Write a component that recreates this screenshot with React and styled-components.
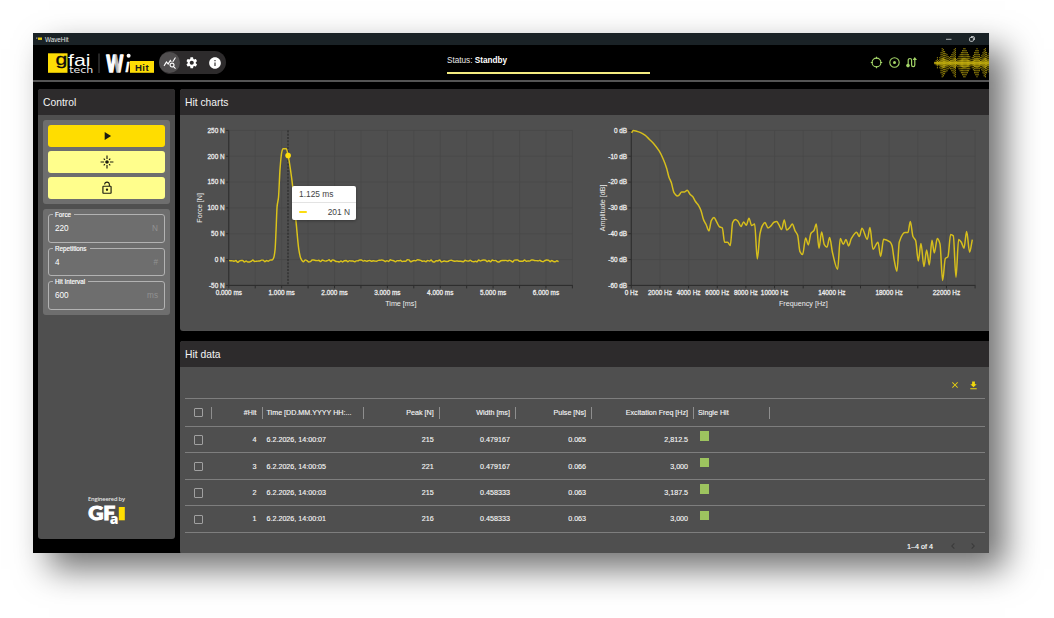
import React from "react";
import styled, { createGlobalStyle } from "styled-components";
import {
  MdQueryStats, MdSettings, MdInfo, MdPlayArrow, MdFlare, MdLockOpen,
  MdClose, MdDownload, MdChevronLeft, MdChevronRight,
} from "react-icons/md";

const GlobalStyle = createGlobalStyle`
  *, *::before, *::after { box-sizing: border-box; }
  body {
    margin: 0;
    background: #fff;
    color: #fff;
    font-family: "Liberation Sans", Arial, sans-serif;
    overflow: hidden;
  }
  svg { display: block; }
`;

const Page = styled.main`
  width: 1054px;
  height: 618px;
  padding: 33px 0 0 33px;
  overflow: hidden;
`;
const AppWindow = styled.div`
  width: 956px;
  height: 520px;
  display: flex;
  flex-direction: column;
  background: #000;
  overflow: hidden;
  box-shadow: 16px 16px 32px rgba(0, 0, 0, 0.56);
`;

const TitleBar = styled.div`
  flex: none;
  height: 12px;
  background: #1a2226;
  display: flex;
  align-items: center;
  padding: 0 14px 0 3px;
  font-size: 6.3px;
  color: #e3e5e6;
`;
const TitleText = styled.span`
  margin-left: 3px;
  flex: 1;
`;
const WindowButtons = styled.div`
  display: flex;
  gap: 17px;
  align-items: center;
`;

const Header = styled.header`
  flex: none;
  height: 37px;
  display: flex;
  align-items: center;
  border-bottom: 2px solid #545454;
  padding-left: 15px;
`;
const Brand = styled.div`
  width: 111px;
  height: 35px;
`;
const NavPill = styled.nav`
  width: 67px;
  height: 23px;
  border-radius: 12px;
  background: #2d2b2c;
  display: flex;
  align-items: center;
  gap: 1.7px;
`;
const NavButton = styled.button`
  width: 21px;
  height: 21px;
  padding: 0;
  border: 0;
  border-radius: 50%;
  display: grid;
  place-items: center;
  color: #fff;
  background: ${(p) => (p.$active ? "#504e4f" : "transparent")};
`;
const Status = styled.div`
  width: 203px;
  height: 20px;
  margin: 2px 0 0 221px;
  font-size: 8.2px;
  line-height: 9px;
  padding-top: 2px;
  color: #e8e8e8;
  border-bottom: 2px solid #f3eb80;
  b { color: #fff; }
`;
const Indicators = styled.div`
  display: flex;
  gap: 4.5px;
  margin-left: 220px;
`;
const WaveLogo = styled.div`
  margin-left: auto;
  width: 55px;
  height: 32px;
`;

const Body = styled.div`
  flex: 1;
  min-height: 0;
  display: flex;
  gap: 5px;
  padding: 7px 0 0 5px;
`;
const Panel = styled.section`
  width: ${(p) => p.$w || "auto"};
  height: ${(p) => p.$h};
  flex: none;
  background: #4f4f4f;
  border-radius: ${(p) => p.$radius || "3px 0 0 3px"};
  overflow: hidden;
  display: flex;
  flex-direction: column;
`;
const PanelTitle = styled.h2`
  margin: 0;
  flex: none;
  height: 26px;
  padding: 0 5px;
  background: #2d2b2c;
  font-size: 10.3px;
  line-height: 27px;
  font-weight: 400;
  color: #f4f4f4;
`;
const MainColumn = styled.div`
  flex: 1;
  min-width: 0;
  display: flex;
  flex-direction: column;
  gap: 10px;
`;

const Group = styled.div`
  margin: 5px 5px 0;
  padding: ${(p) => p.$top || "5px"} 5px 5px;
  border-radius: 3px;
  background: #6e6e6e;
  display: flex;
  flex-direction: column;
  gap: ${(p) => p.$gap};
`;
const ActionButton = styled.button`
  height: 21.6px;
  padding: 0;
  border: 0;
  border-radius: 3px;
  display: grid;
  place-items: center;
  color: #1c1c10;
  background: ${(p) => (p.$primary ? "#ffdd00" : "#fffe8c")};
`;
const Field = styled.fieldset`
  margin: 0;
  height: 31.5px;
  min-width: 0;
  padding: 0 6px;
  border: 1px solid #b2b2b2;
  border-radius: 3px;
  legend {
    margin-left: -2px;
    padding: 0 3px 0 2px;
    font-size: 6.3px;
    line-height: 7px;
    height: 7px;
    color: #fff;
    -webkit-text-stroke: 0.15px #fff;
  }
`;
const FieldRow = styled.div`
  width: 100%;
  height: 21px;
  display: flex;
  align-items: center;
  justify-content: space-between;
  font-size: 8.2px;
  color: #fff;
`;
const Unit = styled.span`
  color: #929292;
`;
const Engineered = styled.div`
  margin: auto auto 12px;
  width: 40px;
  height: 32px;
`;

const Charts = styled.div`
  display: flex;
`;
const AxisText = styled.text`
  font-size: 6.4px;
  fill: #ededed;
  stroke: #ededed;
  stroke-width: 0.26px;
`;
const AxisName = styled.text`
  font-size: 7.2px;
  fill: #ededed;
`;
const ChartBox = styled.div`
  position: relative;
  width: ${(p) => p.$w}px;
  height: 215px;
`;
const Tooltip = styled.div`
  position: absolute;
  left: 112px;
  top: 71px;
  width: 64px;
  height: 34px;
  background: #fff;
  border-radius: 2px;
  box-shadow: 0 1px 3px rgba(0, 0, 0, 0.3);
  color: #444;
  font-size: 8.4px;
`;
const TooltipHead = styled.div`
  height: 17px;
  line-height: 17px;
  padding-left: 7px;
  border-bottom: 1px solid #e3e3e3;
`;
const TooltipRow = styled.div`
  height: 17px;
  display: flex;
  align-items: center;
  justify-content: space-between;
  padding: 0 6px 0 7px;
`;
const SeriesMark = styled.i`
  width: 8px;
  height: 2px;
  border-radius: 1px;
  background: #fbdc12;
`;

const TableTools = styled.div`
  height: 31px;
  flex: none;
  display: flex;
  justify-content: flex-end;
  align-items: center;
  gap: 8px;
  padding: 6px 10px 0 0;
  color: #f0d80c;
`;
const Table = styled.div`
  margin: 0 4px 0 5px;
  font-size: 7.15px;
  color: #f7f7f7;
  -webkit-text-stroke: 0.12px #f7f7f7;
  border-top: 1.5px solid #7e7e7e;
`;
const TableRow = styled.div`
  height: ${(p) => (p.$head ? 28.4 : 26.45)}px;
  display: grid;
  grid-template-columns: 26.5px 51px 101px 76.2px 76.2px 76.2px 102px 76px 1fr;
  align-items: center;
  padding-top: 1px;
  border-bottom: 1.5px solid #7e7e7e;
`;
const Cell = styled.div`
  height: 12px;
  line-height: 12px;
  display: flex;
  align-items: center;
  justify-content: ${(p) => (p.$left ? "flex-start" : "flex-end")};
  padding: ${(p) => (p.$left ? "0 0 0 4px" : "0 5px 0 0")};
  border-right: 1px solid ${(p) => (p.$sep ? "#8e8e8e" : "transparent")};
  white-space: nowrap;
`;
const CheckCell = styled(Cell)`
  padding: 0 0 0 8.5px;
  justify-content: flex-start;
`;
const Check = styled.span`
  width: 9.5px;
  height: 9.5px;
  border: 1px solid #a0a0a0;
  border-radius: 1px;
`;
const HitSwatch = styled.span`
  width: 9.5px;
  height: 9.5px;
  margin: 0 0 8px 1.5px;
  background: #9dc45f;
`;
const Pager = styled.div`
  flex: 1;
  display: flex;
  align-items: center;
  justify-content: flex-end;
  gap: 8px;
  padding: 6px 10px 0 0;
  font-size: 7.2px;
  color: #3a3a3a;
  span { color: #fff; margin-right: 6px; -webkit-text-stroke: 0.15px #fff; }
`;

// Monotone cubic path through a list of [x, y] points.
function smoothPath(pts) {
  const n = pts.length;
  const slope = (i) => (pts[i + 1][1] - pts[i][1]) / (pts[i + 1][0] - pts[i][0]);
  const m = pts.map((_, i) => {
    if (i === 0) return slope(0);
    if (i === n - 1) return slope(n - 2);
    const a = slope(i - 1);
    const b = slope(i);
    return a * b <= 0 ? 0 : (2 * a * b) / (a + b);
  });
  let d = `M${pts[0][0]},${pts[0][1]}`;
  for (let i = 0; i < n - 1; i++) {
    const [x0, y0] = pts[i];
    const [x1, y1] = pts[i + 1];
    const h = (x1 - x0) / 3;
    d += `C${(x0 + h).toFixed(2)},${(y0 + m[i] * h).toFixed(2)} ${(x1 - h).toFixed(2)},${(y1 - m[i + 1] * h).toFixed(2)} ${x1.toFixed(2)},${y1.toFixed(2)}`;
  }
  return d;
}

const pulse = [
  [43.4, 129.6], [45, 127], [46.3, 119], [47.3, 99], [48.3, 76], [49.7, 67], [51.2, 39],
  [53, 21.5], [54.2, 18.3], [57.4, 18.3], [59.5, 26], [61.5, 38], [64, 57], [67.5, 94],
  [70, 119], [72, 128], [74.5, 131.4],
];
function noise(from, to, seed) {
  const out = [];
  let s = seed;
  for (let x = from; x <= to; x += 1.7) {
    s = (s * 16807) % 2147483647;
    const r = s / 2147483647 - 0.5;
    out.push([x, 130.5 + r * 2.2 + (x < 10 ? 0.7 : 0)]);
  }
  return out;
}
const forceLine = [...noise(0.3, 42, 77), ...pulse, ...noise(76.5, 330.5, 4321)];

const spectrum = [
  125,69, 130,62, 140,64, 152,68, 165,76, 178,88, 192,102, 208,124, 220,148, 230,175,
  237,202, 244,218, 252,248, 262,258, 268,255, 275,246, 284,246, 292,241, 300,253,
  308,260, 316,274, 326,287, 333,302, 341,330, 348,343, 357,363, 364,332, 372,323,
  380,336, 388,350, 397,354, 404,397, 413,397, 421,407, 428,338, 436,329, 444,334,
  453,350, 461,336, 469,346, 477,325, 485,347, 494,342, 502,447, 510,372, 517,348,
  525,338, 534,354, 543,348, 552,337, 560,335, 567,345, 575,359, 583,330, 590,360,
  600,352, 607,342, 615,362, 623,376, 630,425, 638,434, 647,384, 655,405, 663,370,
  672,362, 679,342, 687,415, 695,366, 703,404, 711,412, 719,383, 728,430, 743,478,
  751,386, 760,403, 768,389, 776,408, 784,386, 800,367, 808,380, 816,355, 832,388,
  840,353, 849,418, 864,397, 872,440, 881,388, 900,396, 906,407, 913,452, 921,484,
  928,396, 945,368, 954,368, 961,335, 969,380, 977,392, 985,453, 993,401, 1002,470,
  1010,420, 1018,465, 1026,391, 1033,429, 1042,386, 1050,402, 1058,512, 1066,446,
  1074,440, 1082,374, 1090,378, 1098,502, 1106,389, 1114,397, 1122,415, 1130,365,
  1139,427, 1147,389,
];
const spectrumLine = [];
for (let i = 0; i < spectrum.length; i += 2) {
  spectrumLine.push([(spectrum[i] - 124) / 3, (spectrum[i + 1] - 61.5) / 3]);
}

function Axes({ width, xStep, xCount, yLabels, xLabels }) {
  const dy = 155 / (yLabels.length - 1);
  return (
    <g>
      {yLabels.map((t, i) => (
        <g key={t}>
          <line x1="0" x2={width} y1={i * dy} y2={i * dy} stroke="#474747" strokeWidth="0.7" />
          <line x1="-3" x2="0" y1={i * dy} y2={i * dy} stroke="#2c2c2c" strokeWidth="1" />
          <AxisText x="-4.2" y={i * dy + 2.4} textAnchor="end">{t}</AxisText>
        </g>
      ))}
      {Array.from({ length: xCount }, (_, i) => (
        <g key={i}>
          <line x1={i * xStep} x2={i * xStep} y1="0" y2="155" stroke="#474747" strokeWidth="0.7" />
          <line x1={i * xStep} x2={i * xStep} y1="155" y2="158" stroke="#2c2c2c" strokeWidth="1" />
        </g>
      ))}
      <path d={`M0,0V155H${width}`} fill="none" stroke="#2c2c2c" strokeWidth="1" />
      {xLabels.map(([i, t]) => (
        <AxisText key={t} x={i * xStep} y="164.4" textAnchor="middle">{t}</AxisText>
      ))}
    </g>
  );
}

function ForceChart() {
  return (
    <ChartBox $w={404}>
      <svg width="404" height="215">
        <g transform="translate(48.8 15.4)">
          <Axes
            width={344} xStep={26.43} xCount={14}
            yLabels={["250 N", "200 N", "150 N", "100 N", "50 N", "0 N", "-50 N"]}
            xLabels={[0, 1, 2, 3, 4, 5, 6].map((v) => [v * 2, `${v}.000 ms`])}
          />
          <AxisName x="172" y="176" textAnchor="middle">Time [ms]</AxisName>
          <AxisName transform="translate(-26.6 77.5) rotate(-90)" textAnchor="middle">Force [N]</AxisName>
          <line x1="59.2" x2="59.2" y1="0" y2="155" stroke="#222" strokeWidth="1" strokeDasharray="2 1.3" />
          <path d={smoothPath(forceLine)} fill="none" stroke="#dcc41a" strokeWidth="1.45" />
          <circle cx="59.3" cy="25.2" r="2.8" fill="#ffdf0a" />
        </g>
      </svg>
      <Tooltip>
        <TooltipHead>1.125 ms</TooltipHead>
        <TooltipRow><SeriesMark /><span>201 N</span></TooltipRow>
      </Tooltip>
    </ChartBox>
  );
}

function SpectrumChart() {
  return (
    <ChartBox $w={405}>
      <svg width="405" height="215">
        <g transform="translate(47.3 15.4)">
          <Axes
            width={344} xStep={28.65} xCount={13}
            yLabels={["0 dB", "-10 dB", "-20 dB", "-30 dB", "-40 dB", "-50 dB", "-60 dB"]}
            xLabels={[0, 2, 4, 6, 8, 10, 14, 18, 22].map((k) => [k / 2, k ? `${k}000 Hz` : "0 Hz"])}
          />
          <AxisName x="172" y="176" textAnchor="middle">Frequency [Hz]</AxisName>
          <AxisName transform="translate(-26.6 77.5) rotate(-90)" textAnchor="middle">Amplitude [dB]</AxisName>
          <path d={smoothPath(spectrumLine)} fill="none" stroke="#d6be1c" strokeWidth="1.5" />
        </g>
      </svg>
    </ChartBox>
  );
}

function BrandLogo() {
  return (
    <svg width="111" height="35" fontFamily="Liberation Sans, sans-serif">
      <defs>
        <linearGradient id="wing" x1="0" x2="1">
          <stop offset="0" stopColor="#fff" />
          <stop offset="0.45" stopColor="#fff" />
          <stop offset="0.6" stopColor="#aaa" />
          <stop offset="0.8" stopColor="#fff" />
        </linearGradient>
      </defs>
      <rect x="0" y="8.3" width="19.5" height="19.5" fill="#fddc05" />
      <text x="7.4" y="20.4" fontSize="17" fill="#0a0a0a" stroke="#0a0a0a" strokeWidth="0.3" textLength="11.8" lengthAdjust="spacingAndGlyphs">g</text>
      <text x="20" y="20.6" fontSize="16.5" fill="#fff" textLength="22.5" lengthAdjust="spacingAndGlyphs">fai</text>
      <text x="21.3" y="28" fontSize="8.4" fontFamily="DejaVu Sans, sans-serif" fill="#eee" textLength="24" lengthAdjust="spacingAndGlyphs">tech</text>
      <line x1="51" x2="51" y1="8.5" y2="28" stroke="#4b4b4b" strokeWidth="1" />
      <text x="58.6" y="26.6" fontSize="23" fontWeight="700" fill="url(#wing)" stroke="url(#wing)" strokeWidth="1.5" strokeLinejoin="round" textLength="16.6" lengthAdjust="spacingAndGlyphs">W</text>
      <g transform="translate(76.6 27) skewX(-10)">
        <text x="0" y="0" fontSize="19" fontWeight="700" fill="#fff" stroke="#fff" strokeWidth="0.4" textLength="4.2" lengthAdjust="spacingAndGlyphs">ı</text>
      </g>
      <circle cx="80.6" cy="10.8" r="2" fill="#fff" />
      <rect x="82" y="16" width="24" height="11.8" fill="#fddc05" />
      <text x="87" y="25.5" fontWeight="700" fontSize="9.6" fill="#1a1a1a" textLength="13.6">Hit</text>
    </svg>
  );
}

const envelope = [
  1, 3, 6, 3, 6, 11, 15, 14, 12, 10, 9, 7, 6, 7, 9, 11, 14, 15, 4, 5, 7, 9, 11,
  13, 15, 15, 13, 11, 9, 7, 4, 6, 8, 11, 13, 15, 13, 9, 6, 8, 11, 14, 15, 11, 8, 10,
];
function Waveform() {
  return (
    <svg width="55" height="32">
      {envelope.map((a, i) => (
        <line
          key={i} x1={1 + i * 1.2} x2={1 + i * 1.2} y1={16 - a} y2={16 + a}
          stroke="#c4ae10" strokeOpacity={0.85} strokeWidth="0.85" strokeDasharray="1.4 0.6"
        />
      ))}
      {envelope.map((a, i) => (
        <line
          key={`core${i}`} x1={1 + i * 1.2} x2={1 + i * 1.2} y1={16 - a * 0.35} y2={16 + a * 0.35}
          stroke="#cdb80f" strokeOpacity="0.6" strokeWidth="1.2"
        />
      ))}
      <line x1="0" x2="55" y1="16" y2="16" stroke="#cdb80f" strokeWidth="2.4" strokeOpacity="0.6" />
    </svg>
  );
}

function StatusIcons() {
  return (
    <Indicators>
      <svg width="13" height="13" fill="none" stroke="#a4d568" strokeWidth="1.1">
        <circle cx="6.5" cy="6.5" r="4.4" />
        <path d="M6.5 .8v2M6.5 10.2v2M.8 6.5h2M10.2 6.5h2" />
      </svg>
      <svg width="13" height="13" fill="none" stroke="#a4d568" strokeWidth="1.1">
        <circle cx="6.5" cy="6.5" r="4.7" />
        <circle cx="6.5" cy="6.5" r="1.5" fill="#a4d568" stroke="none" />
      </svg>
      <svg width="13" height="13" fill="none" stroke="#a4d568" strokeWidth="1.2">
        <path d="M3.2 9V4.2a1.7 1.7 0 0 1 3.4 0v4.8a1.5 1.5 0 0 0 3.2 0V4" />
        <path d="M9.8 .9l2.2 3.2h-4.4z" fill="#a4d568" stroke="none" />
        <circle cx="3" cy="9.6" r="1.8" fill="#a4d568" stroke="none" />
      </svg>
    </Indicators>
  );
}

const columns = [
  { label: "#Hit" },
  { label: "Time [DD.MM.YYYY HH:...", left: true },
  { label: "Peak [N]" },
  { label: "Width [ms]" },
  { label: "Pulse [Ns]" },
  { label: "Excitation Freq [Hz]" },
  { label: "Single Hit", left: true },
];
const rows = [
  ["4", "6.2.2026, 14:00:07", "215", "0.479167", "0.065", "2,812.5"],
  ["3", "6.2.2026, 14:00:05", "221", "0.479167", "0.066", "3,000"],
  ["2", "6.2.2026, 14:00:03", "215", "0.458333", "0.063", "3,187.5"],
  ["1", "6.2.2026, 14:00:01", "216", "0.458333", "0.063", "3,000"],
];
const fields = [
  ["Force", "220", "N"],
  ["Repetitions", "4", "#"],
  ["Hit Interval", "600", "ms"],
];

export default function App() {
  return (
    <Page>
      <GlobalStyle />
      <AppWindow>
        <TitleBar>
          <svg width="6" height="4"><rect x="0" y=".6" width="1.5" height="1" fill="#aaa" /><rect x="2" y=".5" width="4" height="2.4" fill="#e6ca10" /></svg>
          <TitleText>WaveHit</TitleText>
          <WindowButtons>
            <svg width="6" height="6"><path d="M0 3.3h5.5" stroke="#c4c8ca" strokeWidth="0.9" /></svg>
            <svg width="6" height="6" fill="none" stroke="#d6d9da" strokeWidth="0.9">
              <rect x=".6" y="1.5" width="3.8" height="3.8" rx="1" />
              <path d="M2 .6h2.2a1.2 1.2 0 0 1 1.2 1.2V4" />
            </svg>
          </WindowButtons>
        </TitleBar>

        <Header>
          <Brand><BrandLogo /></Brand>
          <NavPill>
            <NavButton $active><MdQueryStats size={13.5} /></NavButton>
            <NavButton><MdSettings size={13.5} /></NavButton>
            <NavButton><MdInfo size={14} /></NavButton>
          </NavPill>
          <Status>Status: <b>Standby</b></Status>
          <StatusIcons />
          <WaveLogo><Waveform /></WaveLogo>
        </Header>

        <Body>
          <Panel $w="137px" $h="450px" $radius="3px">
            <PanelTitle>Control</PanelTitle>
            <Group $gap="4.6px">
              <ActionButton $primary><MdPlayArrow size={14} /></ActionButton>
              <ActionButton><MdFlare size={14} /></ActionButton>
              <ActionButton><MdLockOpen size={14} /></ActionButton>
            </Group>
            <Group $gap="2px" $top="2.3px">
              {fields.map(([name, value, unit]) => (
                <Field key={name}>
                  <legend>{name}</legend>
                  <FieldRow><span>{value}</span><Unit>{unit}</Unit></FieldRow>
                </Field>
              ))}
            </Group>
            <Engineered>
              <svg width="40" height="32" fontFamily="Open Sans, sans-serif">
                <text x="1" y="6.3" fontSize="5.7" fontWeight="600" fill="#e4e4e4" textLength="37">Engineered by</text>
                <text x="1.2" y="25" fontSize="18" fontFamily="Lato, sans-serif" fontWeight="900" fill="#fff" stroke="#fff" strokeWidth="1" textLength="27" lengthAdjust="spacingAndGlyphs">GF</text>
                <text x="22.8" y="29" fontSize="14" fontWeight="800" fill="#fff" stroke="#4f4f4f" strokeWidth="1.4" paintOrder="stroke">a</text>
                <rect x="31.8" y="12" width="6" height="13.3" fill="#ffde00" />
              </svg>
            </Engineered>
          </Panel>

          <MainColumn>
            <Panel $h="241.5px">
              <PanelTitle>Hit charts</PanelTitle>
              <Charts>
                <ForceChart />
                <SpectrumChart />
              </Charts>
            </Panel>
            <Panel $h="213px">
              <PanelTitle>Hit data</PanelTitle>
              <TableTools><MdClose size={10} /><MdDownload size={11} /></TableTools>
              <Table>
                <TableRow $head>
                  <CheckCell $sep><Check /></CheckCell>
                  {columns.map((c) => (
                    <Cell key={c.label} $sep $left={c.left}>{c.label}</Cell>
                  ))}
                </TableRow>
                {rows.map((r) => (
                  <TableRow key={r[0]}>
                    <CheckCell><Check /></CheckCell>
                    {r.map((v, i) => (
                      <Cell key={i} $left={i === 1}>{v}</Cell>
                    ))}
                    <Cell $left><HitSwatch /></Cell>
                  </TableRow>
                ))}
              </Table>
              <Pager>
                <span>1–4 of 4</span>
                <MdChevronLeft size={12} />
                <MdChevronRight size={12} />
              </Pager>
            </Panel>
          </MainColumn>
        </Body>
      </AppWindow>
    </Page>
  );
}
